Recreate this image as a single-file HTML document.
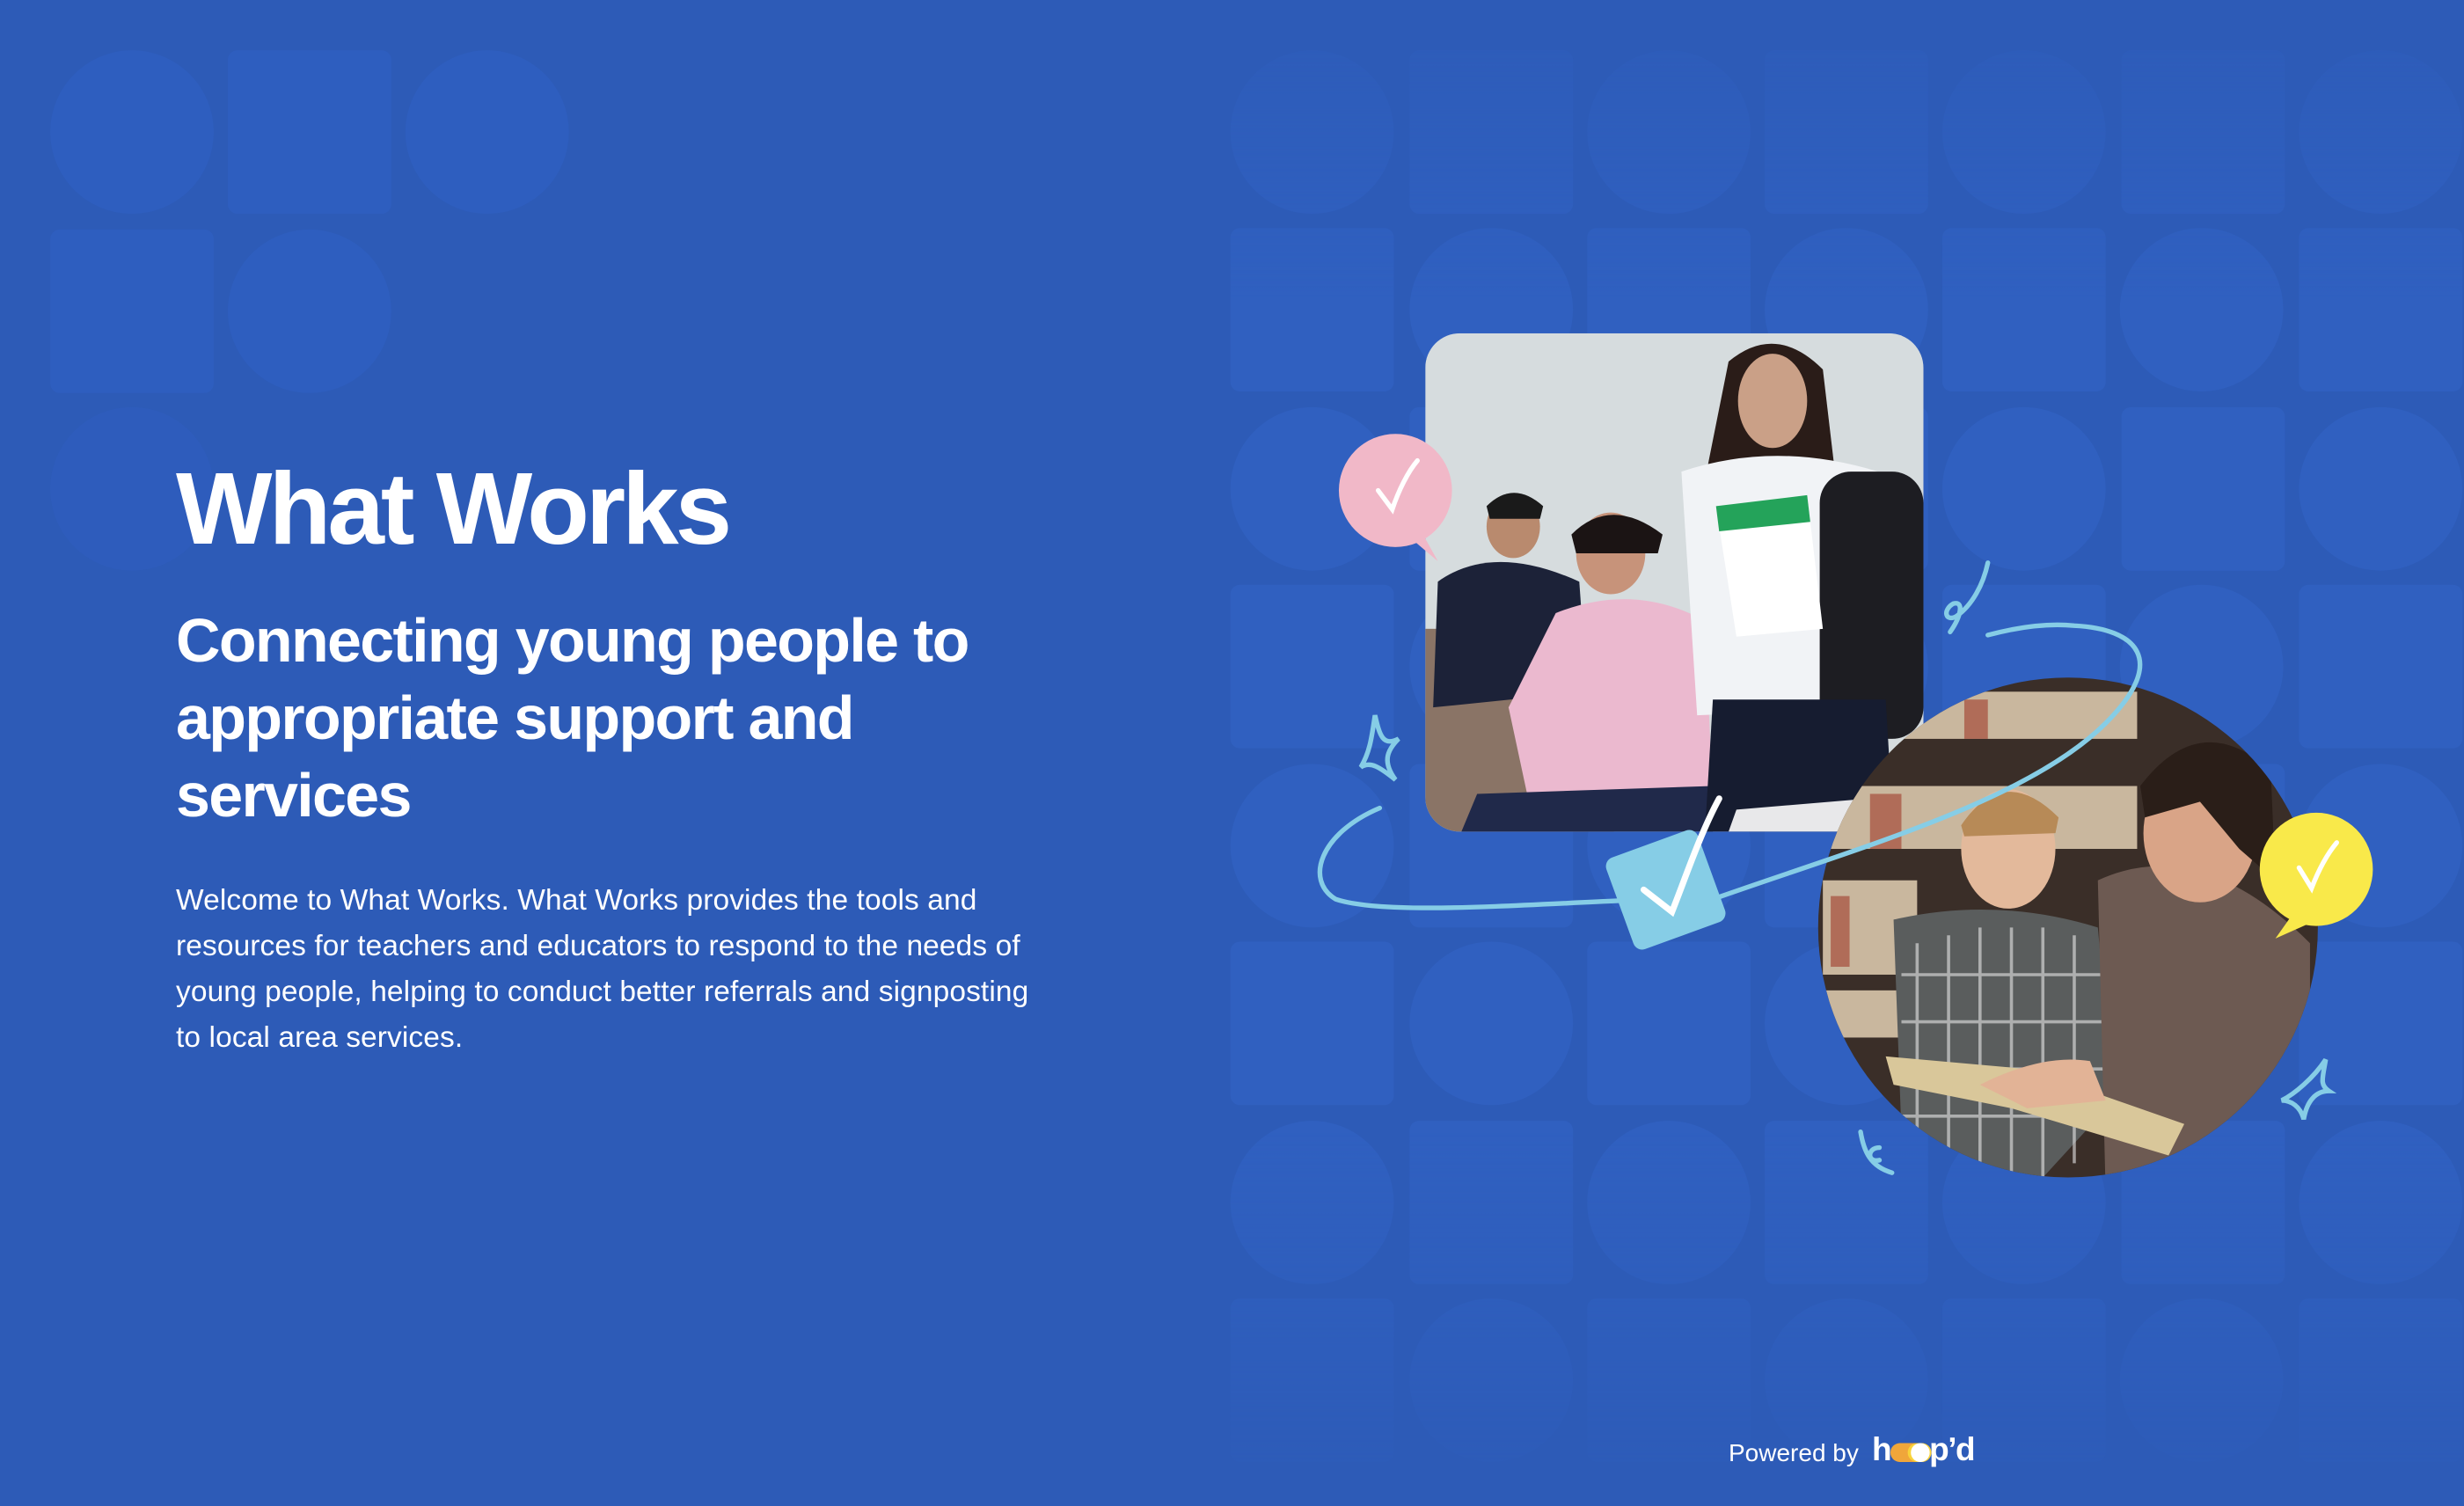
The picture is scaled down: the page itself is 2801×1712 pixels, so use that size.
<!DOCTYPE html>
<html><head><meta charset="utf-8"><style>
html,body{margin:0;padding:0;}
body{width:2801px;height:1712px;background:#2d5bb7;position:relative;overflow:hidden;font-family:"Liberation Sans",sans-serif;color:#fff;}
svg.bg{position:absolute;left:0;top:0;}
h1{position:absolute;left:200px;top:508px;margin:0;font-size:116px;font-weight:700;letter-spacing:-4px;line-height:140px;white-space:nowrap;}
h2{position:absolute;left:200px;top:684px;margin:0;font-size:70px;font-weight:700;letter-spacing:-1.7px;line-height:88px;white-space:nowrap;}
p{position:absolute;left:200px;top:998px;margin:0;font-size:33.5px;line-height:52px;letter-spacing:0.1px;white-space:nowrap;}
.pw{position:absolute;left:1965px;top:1636px;font-size:28px;white-space:nowrap;}
.logo{position:absolute;left:2128px;top:1627px;font-size:37px;font-weight:700;letter-spacing:-1.5px;}
</style></head><body>
<svg class="bg" width="2801" height="1712" viewBox="0 0 1568 958" preserveAspectRatio="none">
<defs>
<linearGradient id="fade" x1="0" y1="0" x2="0" y2="1">
<stop offset="0" stop-color="#fff" stop-opacity="0.2"/>
<stop offset="0.2" stop-color="#fff" stop-opacity="1"/>
<stop offset="0.75" stop-color="#fff" stop-opacity="1"/>
<stop offset="1" stop-color="#fff" stop-opacity="0.1"/>
</linearGradient>
<mask id="m"><rect x="760" y="0" width="820" height="958" fill="url(#fade)"/></mask>
<clipPath id="c1"><rect x="907" y="212" width="317" height="317" rx="22"/></clipPath>
<clipPath id="c2"><ellipse cx="1316" cy="590" rx="159" ry="159"/></clipPath>
</defs>
<g fill="#2e5ebf">
<ellipse cx="84" cy="84" rx="52" ry="52"/><rect x="145" y="32" width="104" height="104" rx="6"/><ellipse cx="310" cy="84" rx="52" ry="52"/>
<rect x="32" y="146" width="104" height="104" rx="6"/><ellipse cx="197" cy="198" rx="52" ry="52"/>
<ellipse cx="84" cy="311" rx="52" ry="52" opacity="0.6"/>
</g>
<g fill="#3060c0" mask="url(#m)">
<g id="row">
<ellipse cx="835" cy="84" rx="52" ry="52"/><rect x="897" y="32" width="104" height="104" rx="6"/><ellipse cx="1062" cy="84" rx="52" ry="52"/><rect x="1123" y="32" width="104" height="104" rx="6"/><ellipse cx="1288" cy="84" rx="52" ry="52"/><rect x="1350" y="32" width="104" height="104" rx="6"/><ellipse cx="1515" cy="84" rx="52" ry="52"/>
</g>
<g id="row2" transform="translate(0,113)">
<rect x="783" y="32" width="104" height="104" rx="6"/><ellipse cx="949" cy="84" rx="52" ry="52"/><rect x="1010" y="32" width="104" height="104" rx="6"/><ellipse cx="1175" cy="84" rx="52" ry="52"/><rect x="1236" y="32" width="104" height="104" rx="6"/><ellipse cx="1401" cy="84" rx="52" ry="52"/><rect x="1463" y="32" width="104" height="104" rx="6"/>
</g>
<use href="#row" y="227"/><use href="#row2" y="227"/><use href="#row" y="454"/><use href="#row2" y="454"/><use href="#row" y="681"/><use href="#row2" y="681"/>
</g>
<!-- photo 1 -->
<g clip-path="url(#c1)">
<rect x="907" y="212" width="317" height="317" fill="#d6dcde"/>
<rect x="907" y="400" width="120" height="129" fill="#8a7466"/>
<path d="M915 370 Q950 345 1005 370 L1010 440 L912 450Z" fill="#1c2238"/>
<ellipse cx="963" cy="335" rx="17" ry="20" fill="#b98a6e"/>
<path d="M946 322 Q963 305 982 322 L980 330 L948 330Z" fill="#1a1a1a"/>
<path d="M990 390 Q1040 370 1085 395 L1090 510 L975 520 L960 450Z" fill="#ebb9cf"/>
<ellipse cx="1025" cy="352" rx="22" ry="26" fill="#c7937a"/>
<path d="M1000 340 Q1025 315 1058 340 L1055 352 L1003 352Z" fill="#1b1414"/>
<path d="M940 505 L1090 500 L1090 529 L930 529Z" fill="#20294a"/>
<path d="M1100 230 Q1130 205 1160 235 L1170 320 L1080 330Z" fill="#2a1c18"/>
<ellipse cx="1128" cy="255" rx="22" ry="30" fill="#caa087"/>
<path d="M1070 300 Q1130 280 1195 300 L1200 450 L1080 455Z" fill="#f1f3f6"/>
<rect x="1158" y="300" width="66" height="170" rx="20" fill="#1d1d22"/>
<path d="M1092 322 L1150 315 L1160 400 L1105 405Z" fill="#ffffff"/>
<path d="M1092 322 L1150 315 L1152 332 L1094 338Z" fill="#24a35a"/>
<path d="M1090 445 L1200 445 L1205 529 L1085 529Z" fill="#161c30"/>
<path d="M1105 515 L1224 505 L1224 529 L1100 529Z" fill="#e8e8ea"/>
</g>
<!-- photo 2 -->
<g clip-path="url(#c2)">
<rect x="1150" y="430" width="330" height="330" fill="#3a2e28"/>
<g fill="#c9b79e"><rect x="1160" y="440" width="200" height="30"/><rect x="1160" y="500" width="200" height="40"/><rect x="1160" y="560" width="60" height="60"/><rect x="1160" y="630" width="60" height="30"/></g>
<g fill="#a54b3a" opacity="0.7"><rect x="1190" y="505" width="20" height="35"/><rect x="1250" y="445" width="15" height="25"/><rect x="1165" y="570" width="12" height="45"/></g>
<path d="M1205 585 Q1270 570 1335 590 L1345 700 L1290 760 L1210 720Z" fill="#5a5d5d"/>
<g stroke="#e6e6e6" stroke-width="2" opacity="0.6"><path d="M1220 600 L1220 720 M1240 595 L1240 740 M1260 590 L1260 750 M1280 590 L1280 750 M1300 590 L1300 750 M1320 595 L1320 740 M1210 620 L1340 620 M1210 650 L1340 650 M1210 680 L1340 680 M1210 710 L1340 710"/></g>
<ellipse cx="1278" cy="540" rx="30" ry="38" fill="#e3b99b"/>
<path d="M1248 525 Q1275 485 1310 520 L1308 530 L1250 532Z" fill="#b78a57"/>
<path d="M1335 560 Q1400 530 1470 600 L1470 760 L1340 760 Z" fill="#6d5a52"/>
<ellipse cx="1400" cy="530" rx="36" ry="44" fill="#d9a487"/>
<path d="M1362 500 Q1400 450 1445 490 L1448 560 L1425 540 L1400 510 L1365 520Z" fill="#2a1e18"/>
<path d="M1200 672 L1290 680 L1390 715 L1380 735 L1280 705 L1205 690Z" fill="#d9c79a"/>
<path d="M1260 690 Q1300 670 1330 675 L1340 700 L1290 705Z" fill="#e2b396"/>
</g>
<!-- doodles -->
<g fill="none" stroke="#86cde6" stroke-width="3" stroke-linecap="round">
<path d="M878 514 C840 530 830 560 850 572 C880 582 960 576 1030 573"/>
<path d="M1090 572 C1180 540 1290 510 1340 460 C1380 420 1360 400 1320 398 C1300 396 1280 400 1265 404"/>
<path d="M1265 358 C1262 372 1255 385 1245 392 C1238 396 1236 388 1243 384 C1250 382 1248 392 1241 402"/>
<path d="M1184 720 C1186 732 1190 742 1204 746 M1196 730 C1188 730 1188 740 1196 738"/>
<path d="M875 455 C878 468 880 475 890 470 C882 478 880 485 888 496 C878 488 872 484 866 488 C872 478 873 468 875 455Z"/>
<path d="M1480 674 C1478 686 1476 690 1482 694 C1474 694 1468 700 1466 712 C1464 704 1458 700 1452 700 C1460 696 1472 686 1480 674Z"/>
</g>
<g transform="rotate(-20 1060 566)"><rect x="1029" y="535" width="62" height="62" rx="6" fill="#86cde6"/></g>
<path d="M1046 566 L1064 580 C1072 560 1082 530 1094 508" fill="none" stroke="#fff" stroke-width="4" stroke-linecap="round"/>
<circle cx="888" cy="312" r="36" fill="#f1b8c8"/><path d="M895 340 L915 357 L900 330Z" fill="#f1b8c8"/>
<path d="M877 312 L886 324 C890 312 896 300 902 293" fill="none" stroke="#fff" stroke-width="3" stroke-linecap="round"/>
<circle cx="1474" cy="553" r="36" fill="#f9e94a"/><path d="M1460 580 L1448 597 L1475 585Z" fill="#f9e94a"/>
<path d="M1463 552 L1471 565 C1476 552 1482 542 1487 536" fill="none" stroke="#fff" stroke-width="3" stroke-linecap="round"/>
<!-- logo oval -->
<rect x="1203" y="918" width="26" height="12" rx="6" fill="#f0a63a"/>
<rect x="1214" y="918" width="15" height="12" rx="6" fill="#f8d33a"/>
<circle cx="1222" cy="924" r="6" fill="#fff"/>
</svg>
<h1>What Works</h1>
<h2>Connecting young people to<br>appropriate support and<br>services</h2>
<p>Welcome to What Works. What Works provides the tools and<br>resources for teachers and educators to respond to the needs of<br>young people, helping to conduct better referrals and signposting<br>to local area services.</p>
<div class="pw">Powered by</div>
<div class="logo">h<span style="display:inline-block;width:44px"></span>p’d</div>
</body></html>
